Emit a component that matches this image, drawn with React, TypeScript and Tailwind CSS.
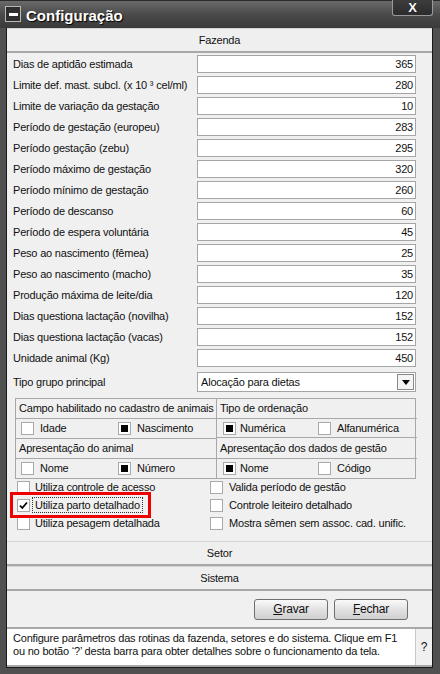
const rows: [string, string][] = [
  ['Dias de aptidão estimada', '365'],
  ['Limite def. mast. subcl. (x 10 ³ cel/ml)', '280'],
  ['Limite de variação da gestação', '10'],
  ['Período de gestação (europeu)', '283'],
  ['Período gestação (zebu)', '295'],
  ['Período máximo de gestação', '320'],
  ['Período mínimo de gestação', '260'],
  ['Período de descanso', '60'],
  ['Período de espera voluntária', '45'],
  ['Peso ao nascimento (fêmea)', '25'],
  ['Peso ao nascimento (macho)', '35'],
  ['Produção máxima de leite/dia', '120'],
  ['Dias questiona lactação (novilha)', '152'],
  ['Dias questiona lactação (vacas)', '152'],
  ['Unidade animal (Kg)', '450'],
];

const Box = ({ mark }: { mark?: 'dot' | 'check' }) => (
  <span className="w-[13px] h-[13px] bg-white border border-[#a9a9a9] flex items-center justify-center shrink-0">
    {mark === 'dot' && <span className="w-[7px] h-[7px] bg-black" />}
    {mark === 'check' && (
      <svg width="9" height="9" viewBox="0 0 9 9">
        <path d="M1 4.5 L3.3 7 L8 1.5" fill="none" stroke="#000" strokeWidth="1.8" />
      </svg>
    )}
  </span>
);

const Band = ({ title }: { title: string }) => (
  <div className="h-[25px] shrink-0 flex items-center justify-center border-t border-[#d4d4d4] border-b-2 border-b-[#a8a8a8] bg-[#efefef] text-[#111]">
    {title}
  </div>
);

const TableCell = ({ left, right, a, b }: { left: string; right: string; a?: boolean; b?: boolean }) => (
  <div className="h-[19px] flex items-center border-r border-[#a8a8a8]">
    <span className="w-[102px] flex items-center gap-[6px] pl-[5px]">
      <Box mark={a ? 'dot' : undefined} />
      <span>{left}</span>
    </span>
    <span className="flex items-center gap-[6px]">
      <Box mark={b ? 'dot' : undefined} />
      <span>{right}</span>
    </span>
  </div>
);

const App = () => {
  return (
    <div
      className="w-[440px] h-[674px] bg-[#505050] flex flex-col text-[11px] tracking-[-0.2px] text-[#111] overflow-hidden"
      style={{ fontFamily: '"Liberation Sans", Arial, sans-serif' }}
    >
      {/* barra de título */}
      <div className="h-[28px] shrink-0 relative bg-gradient-to-b from-[#6a6a6a] via-[#4a4a4a] to-[#3a3a3a] border-t border-[#2a2a2a]">
        <div className="absolute left-[5px] top-[5px] w-[16px] h-[16px] bg-[#2e2e2e] border border-[#b8b8b8] flex items-center justify-center">
          <span className="w-[9px] h-[3px] bg-white" />
        </div>
        <div
          className="absolute left-[26px] top-[4px] text-white font-bold text-[15px] tracking-normal"
          style={{ textShadow: '1px 1px 1px #000' }}
        >
          Configuração
        </div>
        <div className="absolute right-[7px] -top-[1px] w-[41px] h-[16px] bg-gradient-to-b from-[#3c3c3c] to-[#2c2c2c] border border-[#9a9a9a] border-t-0 rounded-b-[3px] flex items-center justify-center">
          <span className="text-white font-bold text-[13px] leading-none" style={{ textShadow: '0 0 1px #000' }}>X</span>
        </div>
      </div>

      <div className="flex-1 flex flex-col ml-[6px] mr-[7px] mb-[6px] border border-t-0 border-[#1a1a1a] bg-[#f0f0f0] min-h-0">
        <Band title="Fazenda" />

        <div className="flex flex-col gap-[3px] pt-[2px]">
          {rows.map(([label, value]) => (
            <div key={label} className="h-[18px] flex items-center">
              <span className="w-[190px] pl-[6px] whitespace-nowrap">{label}</span>
              <span className="w-[219px] h-[18px] bg-white border border-[#a5a5a5] text-right pr-[2px] leading-[16px] text-[#111]">
                {value}
              </span>
            </div>
          ))}
        </div>

        <div className="h-[20px] mt-[5px] flex items-center">
          <span className="w-[190px] pl-[6px]">Tipo grupo principal</span>
          <span className="w-[219px] h-[20px] bg-white border border-[#a5a5a5] flex items-center justify-between pl-[3px] pr-[1px]">
            <span>Alocação para dietas</span>
            <span className="w-[17px] h-[16px] border border-[#8a8a8a] bg-[#f4f4f4] flex items-center justify-center">
              <svg width="8" height="5" viewBox="0 0 8 5">
                <path d="M0 0 H8 L4 5 Z" fill="#000" />
              </svg>
            </span>
          </span>
        </div>

        <div className="mt-[6px] ml-[8px] w-[401px] border border-[#a8a8a8] grid grid-cols-[201px_200px]">
          <div className="h-[20px] flex items-center pl-[3px] border-r border-b border-[#a8a8a8] whitespace-nowrap">
            Campo habilitado no cadastro de animais
          </div>
          <div className="h-[20px] flex items-center pl-[3px] border-b border-[#a8a8a8]">Tipo de ordenação</div>
          <div className="border-b border-[#a8a8a8]">
            <TableCell left="Idade" right="Nascimento" b />
          </div>
          <div className="border-b border-[#a8a8a8] h-[19px] flex items-center pl-[6px]">
            <span className="w-[95px] flex items-center gap-[4px]">
              <Box mark="dot" />
              <span>Numérica</span>
            </span>
            <span className="flex items-center gap-[6px]">
              <Box />
              <span>Alfanumérica</span>
            </span>
          </div>
          <div className="h-[20px] flex items-center pl-[3px] border-r border-b border-[#a8a8a8]">Apresentação do animal</div>
          <div className="h-[20px] flex items-center pl-[3px] border-b border-[#a8a8a8]">Apresentação dos dados de gestão</div>
          <TableCell left="Nome" right="Número" b />
          <div className="h-[19px] flex items-center pl-[6px]">
            <span className="w-[95px] flex items-center gap-[4px]">
              <Box mark="dot" />
              <span>Nome</span>
            </span>
            <span className="flex items-center gap-[6px]">
              <Box />
              <span>Código</span>
            </span>
          </div>
        </div>

        <div className="grid grid-cols-[203px_1fr] -mt-[1px]">
          <div className="flex flex-col">
            <div className="h-[18px] flex items-center gap-[5px] pl-[10px]">
              <Box />
              <span>Utiliza controle de acesso</span>
            </div>
            <div className="h-[18px] flex items-center relative">
              <div className="absolute left-[3px] -top-[4px] w-[141px] h-[26px] border-[3px] border-[#ee0000]" />
              <span className="pl-[10px] flex items-center gap-[2px]">
                <Box mark="check" />
                <span className="border border-dotted border-[#333] px-[2px] leading-[14px]">Utiliza parto detalhado</span>
              </span>
            </div>
            <div className="h-[18px] flex items-center gap-[5px] pl-[10px]">
              <Box />
              <span>Utiliza pesagem detalhada</span>
            </div>
          </div>
          <div className="flex flex-col">
            <div className="h-[18px] flex items-center gap-[6px]">
              <Box />
              <span>Valida período de gestão</span>
            </div>
            <div className="h-[18px] flex items-center gap-[6px]">
              <Box />
              <span>Controle leiteiro detalhado</span>
            </div>
            <div className="h-[18px] flex items-center gap-[6px]">
              <Box />
              <span>Mostra sêmen sem assoc. cad. unific.</span>
            </div>
          </div>
        </div>

        <div className="mt-[9px]">
          <Band title="Setor" />
          <Band title="Sistema" />
        </div>

        <div className="flex-1 flex items-center justify-end gap-[6px] pr-[24px]">
          <button className="w-[74px] h-[21px] rounded-[3px] border border-[#6f6f6f] bg-gradient-to-b from-[#fafafa] via-[#e2e2e2] to-[#cfcfcf] text-[12px] text-[#111]">
            <span className="underline">G</span>ravar
          </button>
          <button className="w-[74px] h-[21px] rounded-[3px] border border-[#6f6f6f] bg-gradient-to-b from-[#fafafa] via-[#e2e2e2] to-[#cfcfcf] text-[12px] text-[#111]">
            <span className="underline">F</span>echar
          </button>
        </div>

        <div className="h-[40px] shrink-0 flex border-t-2 border-[#a8a8a8] border-b-2 border-b-[#a8a8a8]">
          <div className="w-[408px] bg-white pl-[6px] pt-[3px] leading-[13px] text-[11px] text-[#111]">
            <div>Configure parâmetros das rotinas da fazenda, setores e do sistema. Clique em F1</div>
            <div>ou no botão ‘?’ desta barra para obter detalhes sobre o funcionamento da tela.</div>
          </div>
          <div className="flex-1 flex items-center justify-center border-l border-[#c8c8c8] text-[12px]">?</div>
        </div>
      </div>
    </div>
  );
};

export default App;
